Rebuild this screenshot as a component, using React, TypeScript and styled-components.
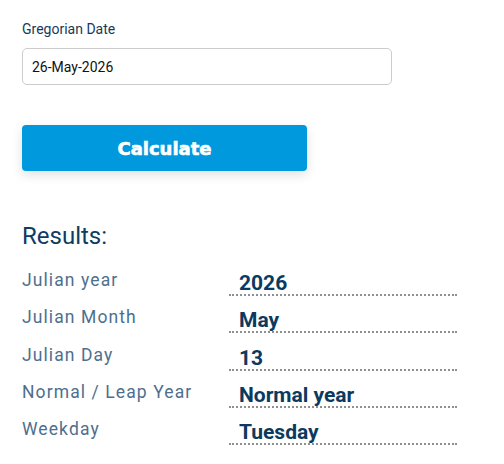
import React from "react";
import styled, { createGlobalStyle } from "styled-components";

const GlobalStyle = createGlobalStyle`
  body {
    margin: 0;
    background: #ffffff;
    font-family: Roboto, "Liberation Sans", sans-serif;
  }
`;

interface ResultRow {
  label: string;
  value: string;
}

const rows: ResultRow[] = [
  { label: "Julian year", value: "2026" },
  { label: "Julian Month", value: "May" },
  { label: "Julian Day", value: "13" },
  { label: "Normal / Leap Year", value: "Normal year" },
  { label: "Weekday", value: "Tuesday" },
];

const App: React.FC = () => {
  return (
    <>
      <GlobalStyle />
      <CalculatorContainer>
        <FieldLabel>Gregorian Date</FieldLabel>
        <DateInput type="text" defaultValue="26-May-2026" />
        <CalculateButton type="button">Calculate</CalculateButton>
        <ResultsTitle>Results:</ResultsTitle>
        <ResultsList>
          {rows.map((row) => (
            <ResultItem key={row.label}>
              <ResultLabel>{row.label}</ResultLabel>
              <ResultValue>{row.value}</ResultValue>
            </ResultItem>
          ))}
        </ResultsList>
      </CalculatorContainer>
    </>
  );
};

export default App;

const CalculatorContainer = styled.div`
  display: flex;
  flex-direction: column;
  align-items: flex-start;
  padding: 20px 0 0 22px;
  width: 436px;
`;

const FieldLabel = styled.label`
  font-size: 14px;
  line-height: 18px;
  color: #163a5c;
  margin-bottom: 10px;
`;

const DateInput = styled.input`
  box-sizing: border-box;
  width: 370px;
  height: 37px;
  padding: 0 9px;
  border: 1px solid #cccccc;
  border-radius: 5px;
  font-family: Roboto, "Liberation Sans", sans-serif;
  font-size: 14px;
  color: #111111;
  outline: none;
`;

const CalculateButton = styled.button`
  margin-top: 40px;
  width: 285px;
  height: 46px;
  border: none;
  border-radius: 4px;
  background: #0099dd;
  color: #ffffff;
  font-family: "DejaVu Sans", "Liberation Sans", sans-serif;
  font-weight: 700;
  font-size: 18px;
  -webkit-text-stroke: 0.6px #ffffff;
  box-shadow: 0 4px 12px rgba(0, 0, 0, 0.12);
  cursor: pointer;
`;

const ResultsTitle = styled.h3`
  margin: 51px 0 0;
  font-size: 24px;
  line-height: 28px;
  font-weight: 400;
  color: #0e3c62;
`;

const ResultsList = styled.div`
  display: flex;
  flex-direction: column;
  margin-top: 16px;
  width: 436px;
`;

const ResultItem = styled.div`
  display: grid;
  grid-template-columns: 207px 228px;
  height: 37.25px;
  align-items: start;
`;

const ResultLabel = styled.div`
  font-size: 17.5px;
  line-height: 20px;
  letter-spacing: 1.1px;
  color: #4d6f8e;
  padding-top: 4px;
`;

const ResultValue = styled.div`
  box-sizing: border-box;
  height: 30px;
  padding: 6px 0 0 10px;
  font-size: 21px;
  line-height: 23px;
  font-weight: 700;
  color: #0b3a5e;
  border-bottom: 2px dotted #8f8f8f;
`;
